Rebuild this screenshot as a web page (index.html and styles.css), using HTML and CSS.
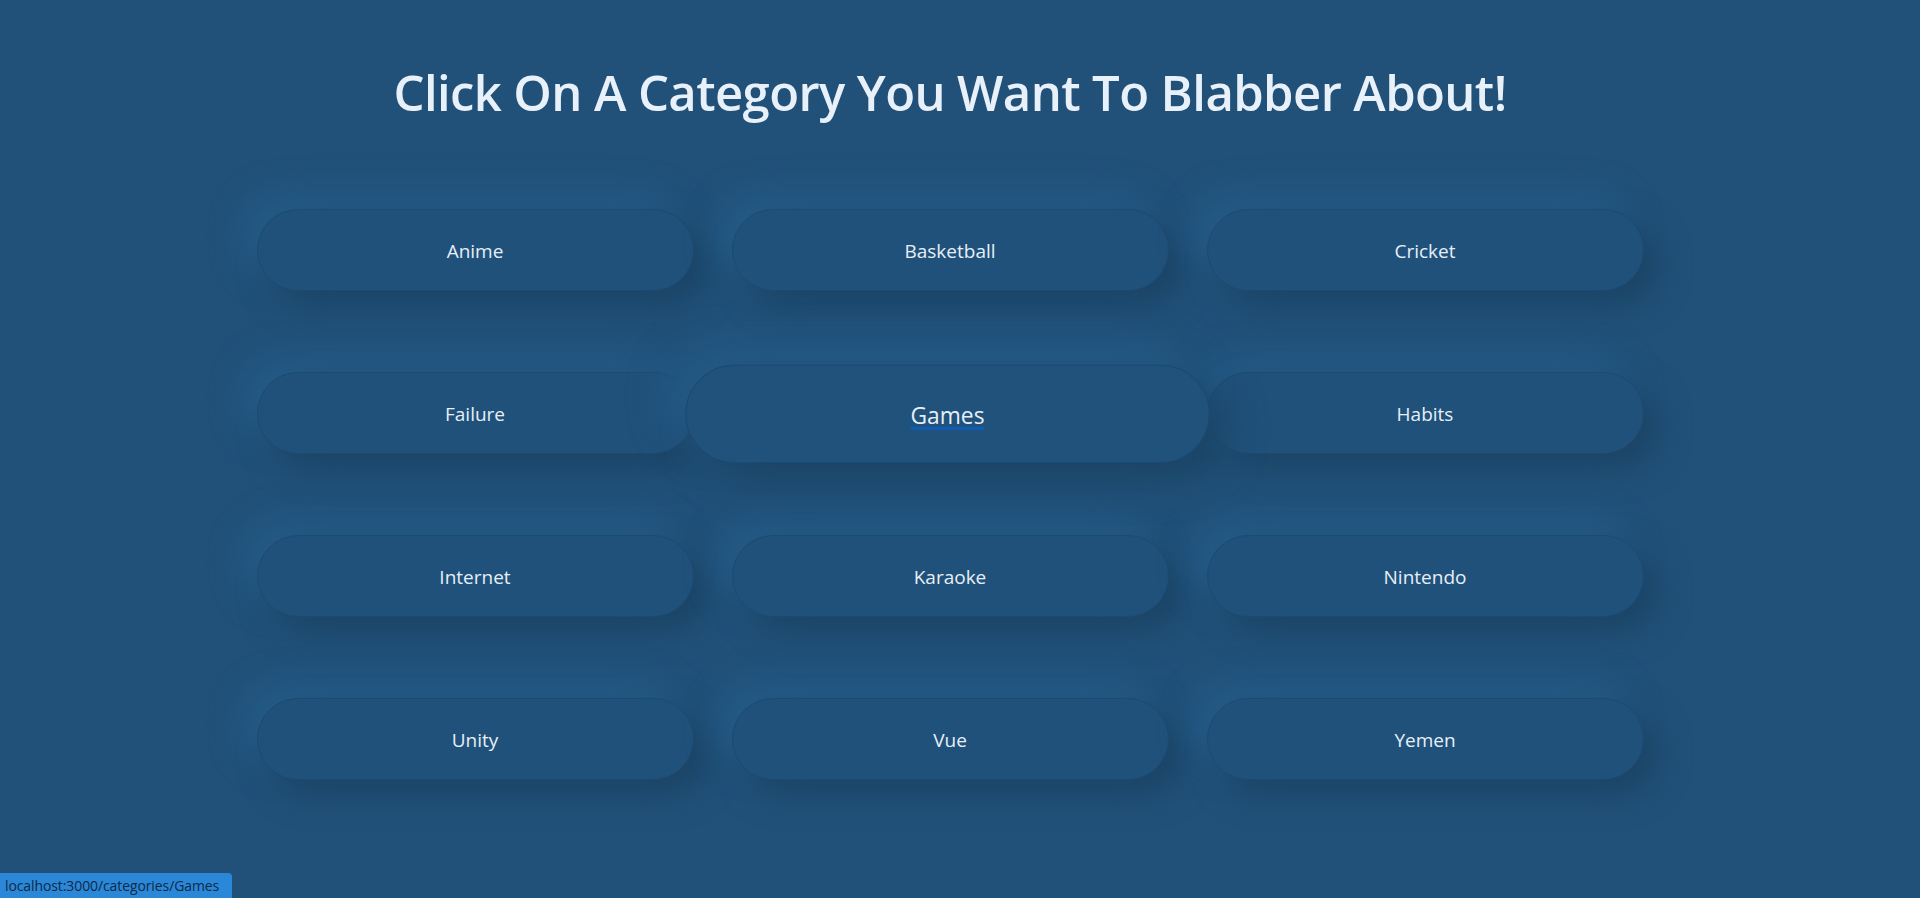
FILE: index.html
```html
<!DOCTYPE html>
<html lang="en">
<head>
<meta charset="utf-8">
<title>Blabber Categories</title>
<link rel="stylesheet" href="styles.css">
</head>
<body>
<main class="page">
  <h1 class="title">Click On A Category You Want To Blabber About!</h1>
  <div class="grid">
    <a class="cat" href="#">Anime</a>
    <a class="cat" href="#">Basketball</a>
    <a class="cat" href="#">Cricket</a>
    <a class="cat" href="#">Failure</a>
    <a class="cat cat--hover" href="#"><span class="cat__label">Games</span></a>
    <a class="cat" href="#">Habits</a>
    <a class="cat" href="#">Internet</a>
    <a class="cat" href="#">Karaoke</a>
    <a class="cat" href="#">Nintendo</a>
    <a class="cat" href="#">Unity</a>
    <a class="cat" href="#">Vue</a>
    <a class="cat" href="#">Yemen</a>
  </div>
</main>
<div class="status">localhost:3000/categories/Games</div>
</body>
</html>
```
FILE: styles.css
```css
html, body {
  margin: 0;
  padding: 0;
  height: 100%;
  overflow: hidden;
}
body {
  background: #215179;
  font-family: "Open Sans", "Noto Sans", sans-serif;
  color: #e8f1fa;
}
.page {
  display: flex;
  flex-direction: column;
  align-items: center;
  padding-right: 20px;
}
.title {
  margin: 63px 0 0;
  font-size: 49px;
  line-height: 58px;
  font-weight: 600;
  letter-spacing: -0.6px;
  color: #e8f1fa;
}
.grid {
  margin-top: 88px;
  display: grid;
  grid-template-columns: repeat(3, 437px);
  grid-auto-rows: 82px;
  column-gap: 38px;
  row-gap: 81px;
}
.cat {
  display: flex;
  align-items: center;
  justify-content: center;
  padding-top: 2px;
  box-sizing: border-box;
  border-radius: 41px;
  background: #20517a;
  border: 1px solid #1d4a70;
  box-shadow: 14px 14px 32px #1b4466, -14px -14px 32px #265d89;
  color: #e6eff8;
  text-decoration: none;
  font-size: 19px;
  position: relative;
}
.cat--hover {
  z-index: 1;
  transform: translate(-3px, 1px) scale(1.2);
  background: #21527b;
}
.cat__label {
  text-decoration: underline;
  text-decoration-color: #0a5ec4;
  text-decoration-thickness: 2px;
  text-underline-offset: 3px;
}
.status {
  position: fixed;
  left: 0;
  bottom: 0;
  height: 25px;
  padding: 0 13px 0 5px;
  display: flex;
  align-items: center;
  background: #2b87d8;
  border-top-right-radius: 4px;
  color: #0d2a45;
  font-family: "Open Sans", sans-serif;
  font-size: 14px;
  letter-spacing: -0.1px;
}
```
